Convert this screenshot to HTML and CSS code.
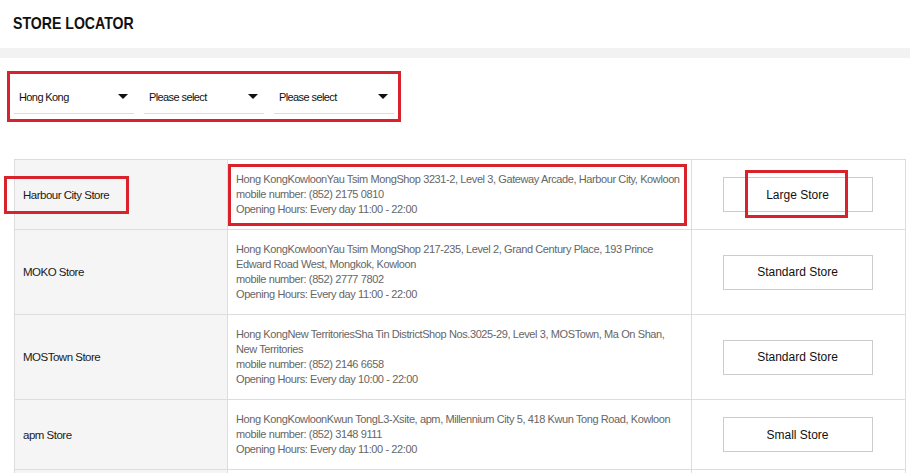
FILE: index.html
```html
<!DOCTYPE html>
<html lang="en">
<head>
<meta charset="utf-8">
<title>Store Locator</title>
<link rel="stylesheet" href="styles.css">
</head>
<body>
<header class="page-header">
  <h1 class="page-title">STORE LOCATOR</h1>
</header>
<div class="band"></div>
<main class="content">
  <div class="filters">
    <div class="select"><span class="select-label">Hong Kong</span><span class="caret"></span></div>
    <div class="select"><span class="select-label">Please select</span><span class="caret"></span></div>
    <div class="select"><span class="select-label">Please select</span><span class="caret"></span></div>
    <span class="mark mark-filters"></span>
  </div>

  <table class="stores">
    <colgroup>
      <col class="col-name">
      <col class="col-addr">
      <col class="col-type">
    </colgroup>
    <tbody>
      <tr>
        <td class="name"><span class="name-text">Harbour City Store<span class="mark mark-name"></span></span></td>
        <td class="addr">
          <div class="addr-inner">
            <p>Hong KongKowloonYau Tsim MongShop 3231-2, Level 3, Gateway Arcade, Harbour City, Kowloon</p>
            <p>mobile number: (852) 2175 0810</p>
            <p>Opening Hours: Every day 11:00 - 22:00</p>
            <span class="mark mark-addr"></span>
          </div>
        </td>
        <td class="type"><span class="btn">Large Store<span class="mark mark-btn"></span></span></td>
      </tr>
      <tr>
        <td class="name"><span class="name-text">MOKO Store</span></td>
        <td class="addr">
          <div class="addr-inner">
            <p>Hong KongKowloonYau Tsim MongShop 217-235, Level 2, Grand Century Place, 193 Prince Edward Road West, Mongkok, Kowloon</p>
            <p>mobile number: (852) 2777 7802</p>
            <p>Opening Hours: Every day 11:00 - 22:00</p>
          </div>
        </td>
        <td class="type"><span class="btn">Standard Store</span></td>
      </tr>
      <tr>
        <td class="name"><span class="name-text">MOSTown Store</span></td>
        <td class="addr">
          <div class="addr-inner">
            <p>Hong KongNew TerritoriesSha Tin DistrictShop Nos.3025-29, Level 3, MOSTown, Ma On Shan, New Territories</p>
            <p>mobile number: (852) 2146 6658</p>
            <p>Opening Hours: Every day 10:00 - 22:00</p>
          </div>
        </td>
        <td class="type"><span class="btn">Standard Store</span></td>
      </tr>
      <tr>
        <td class="name"><span class="name-text">apm Store</span></td>
        <td class="addr">
          <div class="addr-inner">
            <p>Hong KongKowloonKwun TongL3-Xsite, apm, Millennium City 5, 418 Kwun Tong Road, Kowloon</p>
            <p>mobile number: (852) 3148 9111</p>
            <p>Opening Hours: Every day 11:00 - 22:00</p>
          </div>
        </td>
        <td class="type"><span class="btn">Small Store</span></td>
      </tr>
      <tr class="row-next">
        <td class="name"></td>
        <td class="addr"></td>
        <td class="type"></td>
      </tr>
    </tbody>
  </table>
</main>
</body>
</html>
```

FILE: styles.css
```css
* { box-sizing: border-box; }

html, body {
  margin: 0;
  padding: 0;
  background: #ffffff;
  overflow: hidden;
}

body {
  font-family: "Liberation Sans", Arial, sans-serif;
  color: #222;
}

.page-header {
  height: 48px;
  padding: 14px 0 0 13px;
}

.page-title {
  display: inline-block;
  margin: 0;
  font-size: 17px;
  line-height: 20px;
  font-weight: 700;
  color: #111;
  transform: scaleX(0.83);
  transform-origin: left center;
}

.band {
  height: 10px;
  background: #f2f2f2;
}

.content {
  padding: 22px 0 0 14px;
}

.filters {
  position: relative;
  display: flex;
  gap: 10px;
  width: 380px;
}

.select {
  width: 120px;
  height: 34px;
  display: flex;
  align-items: center;
  justify-content: space-between;
  padding: 0 6px 0 5px;
  border-bottom: 1px solid #dcdcdc;
  font-size: 11px;
  letter-spacing: -0.6px;
  color: #111;
}

.caret {
  width: 0;
  height: 0;
  border-left: 5px solid transparent;
  border-right: 5px solid transparent;
  border-top: 5px solid #111;
}

.mark {
  position: absolute;
  border: 3px solid #d8232c;
  pointer-events: none;
}

.mark-filters {
  top: -9px;
  bottom: -8px;
  left: -7px;
  right: -7px;
}

.stores {
  margin-top: 45px;
  width: 891px;
  border-collapse: collapse;
  table-layout: fixed;
}

.col-name { width: 213px; }
.col-addr { width: 464px; }
.col-type { width: 214px; }

.stores td {
  border: 1px solid #dddddd;
  padding: 12px 8px;
  vertical-align: middle;
}

.stores .row-next td {
  height: 70px;
}

.stores td.name {
  background: #f5f5f5;
  font-size: 11.5px;
  color: #1a1a1a;
  letter-spacing: -0.5px;
}

.name-text {
  position: relative;
}

.mark-name {
  left: -19px;
  right: -20px;
  top: -13px;
  bottom: -13px;
}

.addr-inner {
  position: relative;
  font-size: 11px;
  line-height: 15px;
  letter-spacing: -0.4px;
  color: #666;
}

.addr-inner p {
  margin: 0;
}

.mark-addr {
  top: -8px;
  bottom: -9px;
  left: -8px;
  right: -4px;
}

.stores td.type {
  text-align: center;
  padding: 12px 9px 12px 7px;
}

.btn {
  position: relative;
  display: inline-flex;
  align-items: center;
  justify-content: center;
  width: 150px;
  height: 35px;
  border: 1px solid #cccccc;
  background: #fff;
  font-size: 12px;
  color: #111;
}

.mark-btn {
  left: 21px;
  right: 24px;
  top: -8px;
  bottom: -7px;
}
```
